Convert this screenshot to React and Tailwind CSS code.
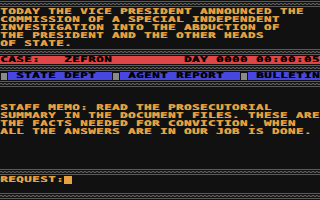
const story = [
  "TODAY THE VICE PRESIDENT ANNOUNCED THE",
  "COMMISSION OF A SPECIAL INDEPENDENT",
  "INVESTIGATION INTO THE ABDUCTION OF",
  "THE PRESIDENT AND THE OTHER HEADS",
  "OF STATE.",
];

const memo = [
  "STAFF MEMO: READ THE PROSECUTORIAL",
  "SUMMARY IN THE DOCUMENT FILES. THESE ARE",
  "THE FACTS NEEDED FOR CONVICTION. WHEN",
  "ALL THE ANSWERS ARE IN OUR JOB IS DONE.",
];

// 8px character cell, glyphs stretched sideways to look like the 8-bit font
const font = "font-['DejaVu_Sans_Mono',monospace] font-bold text-[7.8px] leading-[8px] tracking-[0.3px] whitespace-pre [text-shadow:0.4px_0_0_currentColor]";

const Txt = ({ children }) => (
  <span className="inline-block origin-left scale-x-[1.6]">{children}</span>
);

const Divider = () => (
  <div className="h-2 flex flex-col">
    <div className="h-px" />
    <div className="h-px bg-[#5a5a5a]" />
    <div className="h-px" />
    <div className="h-px bg-[linear-gradient(90deg,#5a5a5a_50%,#2a2a2a_50%)] bg-[length:4px_1px]" />
    <div className="h-px bg-[linear-gradient(90deg,#2a2a2a_50%,#5a5a5a_50%)] bg-[length:4px_1px]" />
    <div className="h-px" />
    <div className="h-px bg-[#5a5a5a]" />
    <div className="h-px" />
  </div>
);

const Line = ({ children, className = "" }) => (
  <div className={`h-2 overflow-hidden ${font} ${className}`}>
    <Txt>{children}</Txt>
  </div>
);

const Tab = ({ label, cols }) => (
  <>
    <div className="w-2 h-2 shrink-0 flex items-start pt-px pl-px">
      <div className="w-[6px] h-[7px] bg-[#8a8a8a]" />
    </div>
    <div className={`h-2 shrink-0 overflow-hidden bg-[#4646e0] text-black ${font} ${cols}`}>
      <Txt>{label}</Txt>
    </div>
  </>
);

export default function App() {
  return (
    <div className="w-[320px] h-[200px] bg-[#111111] overflow-hidden flex flex-col text-[#e8a040]">
      <Divider />
      {story.map((s) => (
        <Line key={s}>{s}</Line>
      ))}
      <Divider />
      <Line className="bg-[#e04646] text-black">
        {"CASE:   ZEFRON         DAY 0000 00:00:05"}
      </Line>
      <Divider />
      <div className="h-2 flex overflow-hidden">
        <Tab label=" STATE DEPT  " cols="w-[104px]" />
        <Tab label=" AGENT REPORT  " cols="w-[120px]" />
        <Tab label=" BULLETIN" cols="w-[72px]" />
      </div>
      <Divider />
      <div className="h-4" />
      {memo.map((s) => (
        <Line key={s}>{s}</Line>
      ))}
      <div className="h-8" />
      <Divider />
      <div className="h-2 flex">
        <Line className="w-16 shrink-0">{"REQUEST:"}</Line>
        <div className="w-2 h-2 bg-[#e8a040]" />
      </div>
      <div className="h-2" />
      <Divider />
    </div>
  );
}
